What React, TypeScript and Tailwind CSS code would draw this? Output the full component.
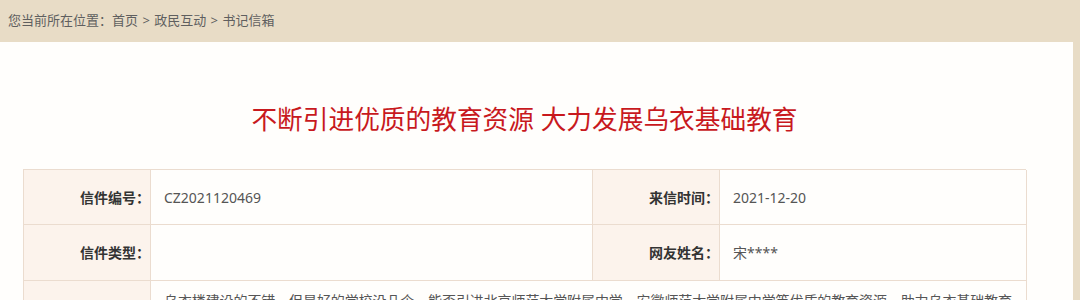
import React from "react";

const font = { fontFamily: '"Noto Sans", "Noto Sans CJK SC", sans-serif' };

export default function App() {
  return (
    <div className="w-[1080px] h-[300px] overflow-hidden bg-[#e8dcc6]" style={font}>
      <div className="h-[42px] flex items-center pl-[8px] text-[13px] text-[#5f5f5f]">
        <span>您当前所在位置：首页 <span className="px-[1px]">&gt;</span> 政民互动 <span className="px-[1px]">&gt;</span> 书记信箱</span>
      </div>
      <div className="w-[1073px] h-[258px] bg-[#fffefc]">
        <div className="ml-[23px] w-[1003px]">
          <h1 className="pt-[59px] h-[96px] text-center text-[25.7px] leading-[38px] text-[#c8191e]">
            不断引进优质的教育资源 大力发展乌衣基础教育
          </h1>
          <div className="mt-[31px] grid grid-cols-[127px_442px_127px_307px] border-t border-l border-[#ebdccf] text-[14px]">
            <div className="h-[55px] flex items-center justify-end bg-[#fcf3ec] border-r border-b border-[#ebdccf] font-bold text-[#333]">信件编号：</div>
            <div className="h-[55px] flex items-center pl-[13px] border-r border-b border-[#ebdccf] text-[#555]">CZ2021120469</div>
            <div className="h-[55px] flex items-center justify-end bg-[#fcf3ec] border-r border-b border-[#ebdccf] font-bold text-[#333]">来信时间：</div>
            <div className="h-[55px] flex items-center pl-[13px] border-r border-b border-[#ebdccf] text-[#555]">2021-12-20</div>

            <div className="h-[56px] flex items-center justify-end bg-[#fcf3ec] border-r border-b border-[#ebdccf] font-bold text-[#333]">信件类型：</div>
            <div className="h-[56px] flex items-center pl-[13px] border-r border-b border-[#ebdccf] text-[#555]"></div>
            <div className="h-[56px] flex items-center justify-end bg-[#fcf3ec] border-r border-b border-[#ebdccf] font-bold text-[#333]">网友姓名：</div>
            <div className="h-[56px] flex items-center pl-[13px] border-r border-b border-[#ebdccf] text-[#555]">宋****</div>

            <div className="h-[80px] bg-[#fcf3ec] border-r border-b border-[#ebdccf]"></div>
            <div className="col-span-3 pt-[6px] pl-[13px] pr-[8px] leading-[28px] tracking-[-0.1px] border-r border-b border-[#ebdccf] text-[#555]">
              乌衣楼建设的不错，但是好的学校没几个，能否引进北京师范大学附属中学、安徽师范大学附属中学等优质的教育资源，助力乌衣基础教育
            </div>
          </div>
        </div>
      </div>
    </div>
  );
}
